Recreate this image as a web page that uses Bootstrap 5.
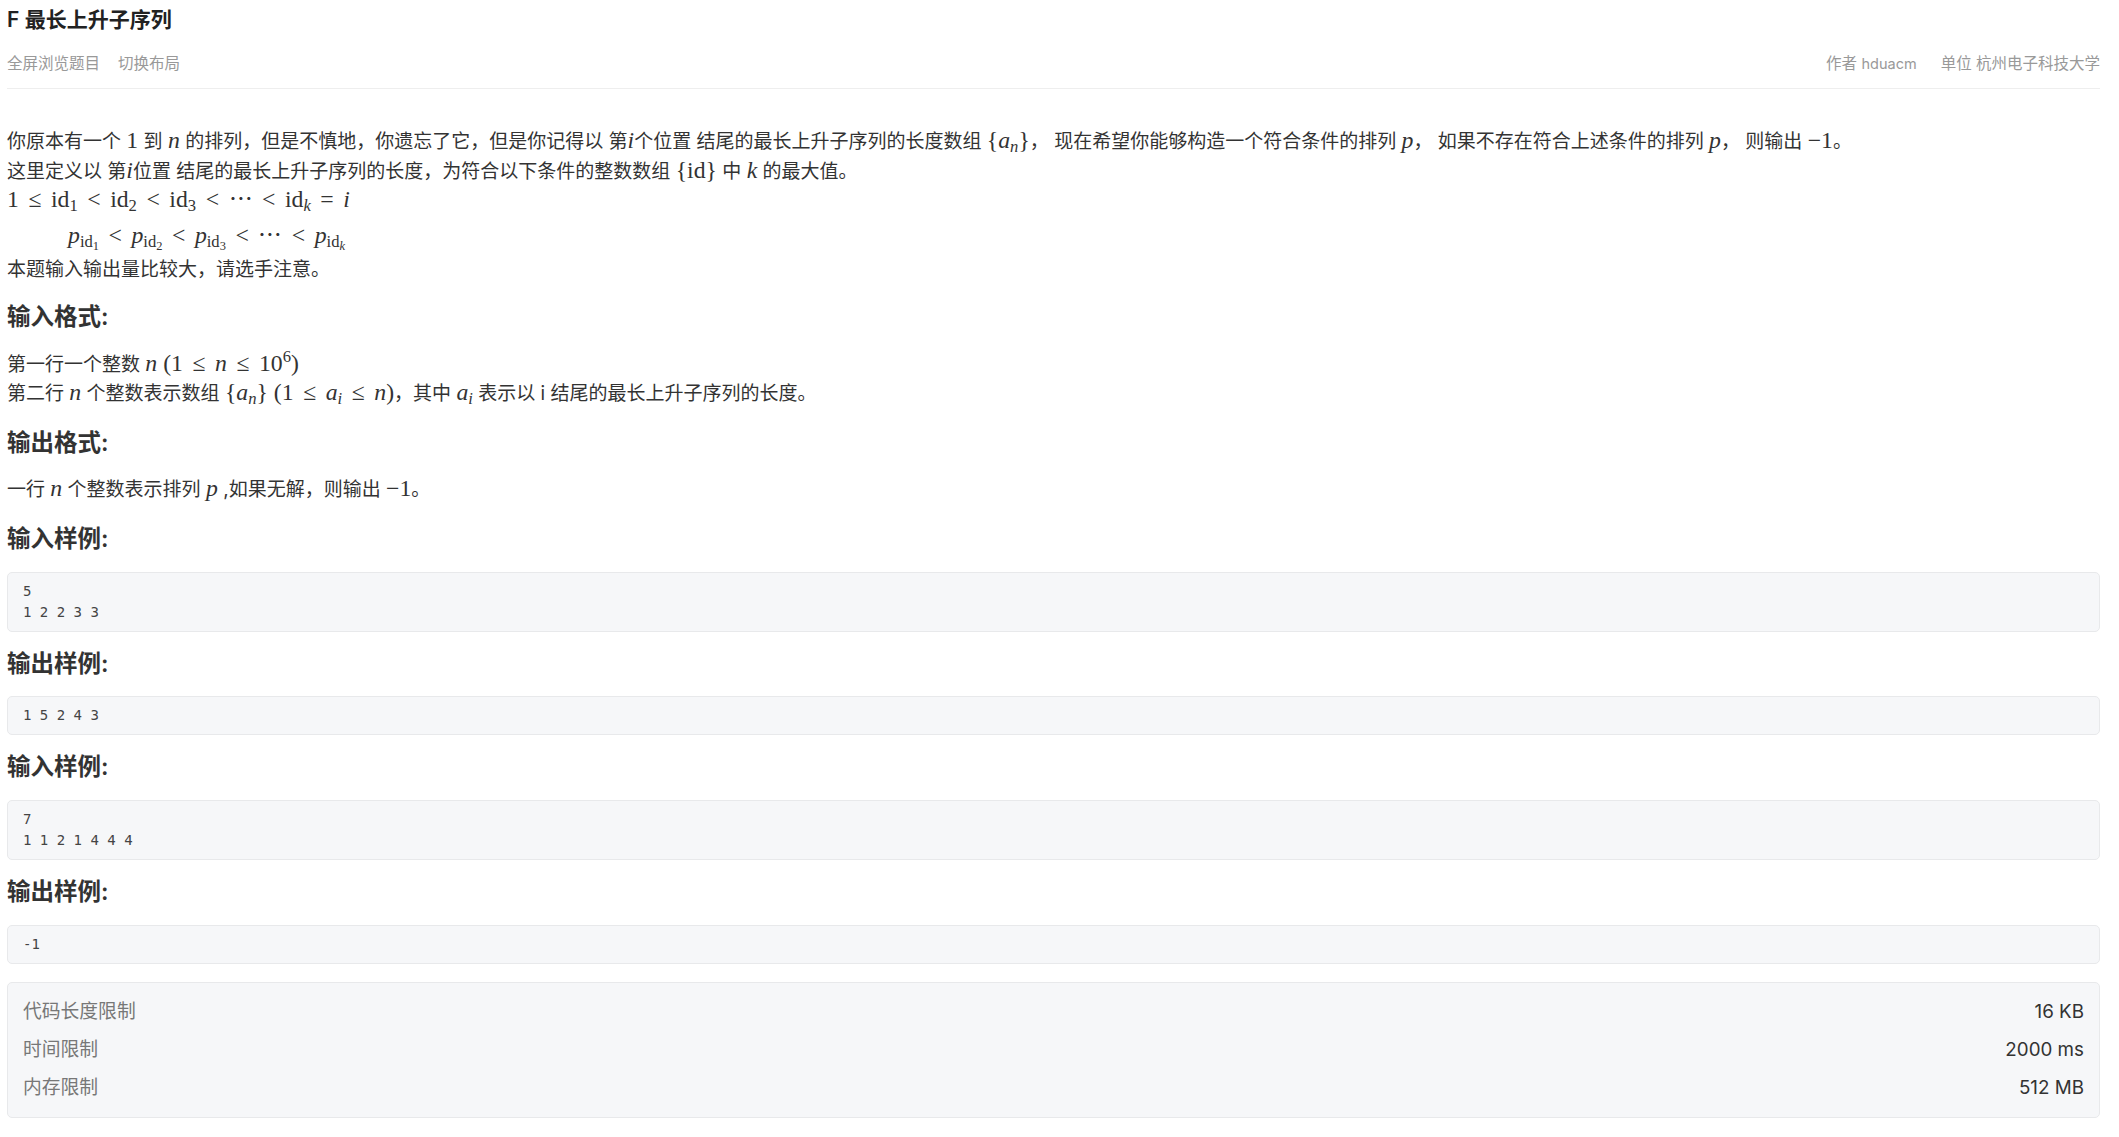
<!DOCTYPE html>
<html lang="zh-CN">
<head>
<meta charset="utf-8">
<title>F 最长上升子序列</title>
<link href="https://cdn.jsdelivr.net/npm/bootstrap@5.3.0/dist/css/bootstrap.min.css" rel="stylesheet">
<style>
body{font-family:Inter,"Noto Sans CJK SC",sans-serif;color:#333;background:#fff;font-size:19px;line-height:29.5px}
.page-wrap{padding:0 19px 0 7px}
.prob-title{font-size:21px;font-weight:600;line-height:28px;margin:6px 0 0;color:#222}
.meta-bar{font-size:15.5px;line-height:22px;color:#999;padding:19px 0 13px;border-bottom:1px solid #eee;margin-bottom:38px}
.meta-bar span+span{margin-left:18px}
.meta-bar div+div span+span{margin-left:24px}
.meta-latin{font-size:14.5px}
.desc-line{margin:0}
.mth{font-family:"Liberation Serif",serif;font-size:1.25em;line-height:0}
.mth i{font-style:italic}
.mth sub,.mth sup{font-size:.7em}
.mth sub sub{font-size:.75em}
.rel{margin:0 .4em}
.indent-line{padding-left:61px;padding-top:6px;padding-bottom:4px}
.end-line{margin-bottom:-1.5px}
.sec-head{font-size:23.5px;font-weight:600;line-height:32px;color:#333;margin:18px 0 16.7px}
.sample{font-family:"DejaVu Sans Mono",monospace;font-size:14px;line-height:21px;color:#444;background:#f6f7f9;border:1px solid #e8e9eb;border-radius:5px;padding:8px 15px;margin:0}
.sample+.sec-head{margin-top:16px}
.limits{background:#f6f7f9;border:1px solid #e8e9eb;border-radius:5px;padding:10px 15px;margin-top:18.5px;list-style:none;font-size:18.8px}
.limits li{line-height:38px;color:#777}
.limits b{font-weight:400;color:#333}
</style>
</head>
<body>
<main class="page-wrap">
  <h1 class="prob-title">F 最长上升子序列</h1>
  <div class="meta-bar d-flex justify-content-between">
    <div><span>全屏浏览题目</span><span>切换布局</span></div>
    <div><span>作者 <em class="meta-latin fst-normal">hduacm</em></span><span>单位 杭州电子科技大学</span></div>
  </div>
  <p class="desc-line">你原本有一个 <span class="mth">1</span> 到 <span class="mth"><i>n</i></span> 的排列，但是不慎地，你遗忘了它，但是你记得以 第<span class="mth"><i>i</i></span>个位置 结尾的最长上升子序列的长度数组 <span class="mth">{<i>a<sub>n</sub></i>}</span>， 现在希望你能够构造一个符合条件的排列 <span class="mth"><i>p</i></span>， 如果不存在符合上述条件的排列 <span class="mth"><i>p</i></span>， 则输出 <span class="mth">−1</span>。</p>
  <p class="desc-line">这里定义以 第<span class="mth"><i>i</i></span>位置 结尾的最长上升子序列的长度，为符合以下条件的整数数组 <span class="mth">{id}</span> 中 <span class="mth"><i>k</i></span> 的最大值。</p>
  <p class="desc-line"><span class="mth">1<span class="rel">≤</span>id<sub>1</sub><span class="rel">&lt;</span>id<sub>2</sub><span class="rel">&lt;</span>id<sub>3</sub><span class="rel">&lt;</span>⋯<span class="rel">&lt;</span>id<sub><i>k</i></sub><span class="rel">=</span><i>i</i></span></p>
  <p class="desc-line indent-line"><span class="mth"><i>p</i><sub>id<sub>1</sub></sub><span class="rel">&lt;</span><i>p</i><sub>id<sub>2</sub></sub><span class="rel">&lt;</span><i>p</i><sub>id<sub>3</sub></sub><span class="rel">&lt;</span>⋯<span class="rel">&lt;</span><i>p</i><sub>id<sub><i>k</i></sub></sub></span></p>
  <p class="desc-line end-line">本题输入输出量比较大，请选手注意。</p>

  <h2 class="sec-head">输入格式:</h2>
  <p class="desc-line">第一行一个整数 <span class="mth"><i>n</i> (1<span class="rel">≤</span><i>n</i><span class="rel">≤</span>10<sup>6</sup>)</span></p>
  <p class="desc-line">第二行 <span class="mth"><i>n</i></span> 个整数表示数组 <span class="mth">{<i>a<sub>n</sub></i>} (1<span class="rel">≤</span><i>a<sub>i</sub></i><span class="rel">≤</span><i>n</i>)</span>，其中 <span class="mth"><i>a<sub>i</sub></i></span> 表示以 i 结尾的最长上升子序列的长度。</p>

  <h2 class="sec-head">输出格式:</h2>
  <p class="desc-line">一行 <span class="mth"><i>n</i></span> 个整数表示排列 <span class="mth"><i>p</i></span> ,如果无解，则输出 <span class="mth">−1</span>。</p>

  <h2 class="sec-head">输入样例:</h2>
  <pre class="sample">5
1 2 2 3 3</pre>
  <h2 class="sec-head">输出样例:</h2>
  <pre class="sample">1 5 2 4 3</pre>
  <h2 class="sec-head">输入样例:</h2>
  <pre class="sample">7
1 1 2 1 4 4 4</pre>
  <h2 class="sec-head">输出样例:</h2>
  <pre class="sample">-1</pre>

  <ul class="limits">
    <li class="d-flex justify-content-between"><span>代码长度限制</span><b>16 KB</b></li>
    <li class="d-flex justify-content-between"><span>时间限制</span><b>2000 ms</b></li>
    <li class="d-flex justify-content-between"><span>内存限制</span><b>512 MB</b></li>
  </ul>
</main>
</body>
</html>
